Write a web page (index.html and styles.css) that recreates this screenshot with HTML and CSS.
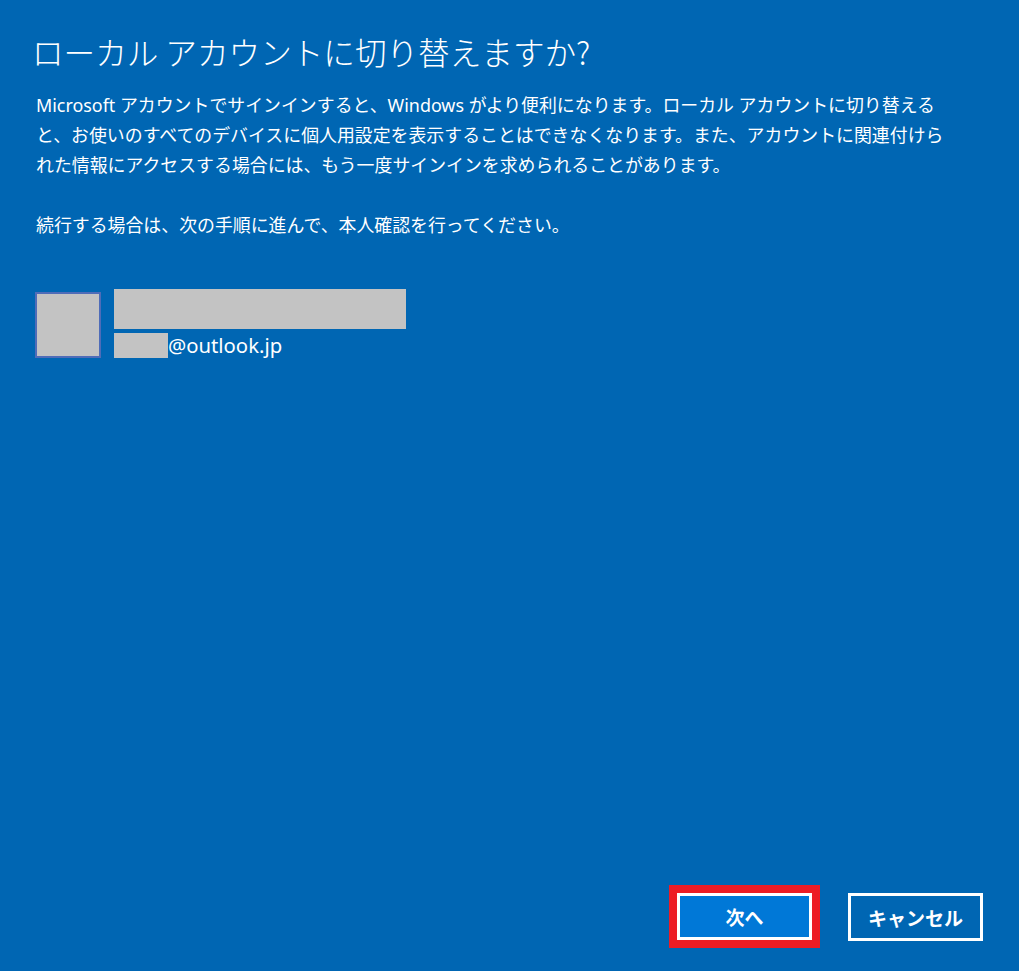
FILE: index.html
```html
<!DOCTYPE html>
<html lang="ja">
<head>
<meta charset="utf-8">
<link rel="stylesheet" href="styles.css">
</head>
<body>
<div class="page">
  <main class="content">
    <h1 class="title">ローカル アカウントに切り替えますか?</h1>
    <p class="desc">Microsoft アカウントでサインインすると、Windows がより便利になります。ローカル アカウントに切り替える<br>と、お使いのすべてのデバイスに個人用設定を表示することはできなくなります。また、アカウントに関連付けら<br>れた情報にアクセスする場合には、もう一度サインインを求められることがあります。</p>
    <p class="desc">続行する場合は、次の手順に進んで、本人確認を行ってください。</p>
    <div class="account">
      <div class="avatar"></div>
      <div class="account-info">
        <div class="name-mask"></div>
        <div class="email-row"><span class="email-mask"></span><span class="email">@outlook.jp</span></div>
      </div>
    </div>
  </main>
  <footer class="actions">
    <button class="btn btn-primary">次へ</button>
    <button class="btn btn-secondary">キャンセル</button>
  </footer>
</div>
</body>
</html>
```

FILE: styles.css
```css
html, body {
  margin: 0;
  padding: 0;
  background: #0066b3;
}
body {
  color: #ffffff;
  font-family: "Noto Sans", "Noto Sans CJK JP", sans-serif;
}
.page {
  height: 971px;
  display: flex;
  flex-direction: column;
  box-sizing: border-box;
}
.content {
  flex: 1;
  padding: 31px 36px 0 36px;
}
.title {
  margin: 0;
  font-family: "Noto Sans CJK JP", sans-serif;
  font-weight: 300;
  font-size: 31.6px;
  line-height: 40px;
  margin-left: -4px;
}
.desc {
  margin: 19px 0 0 0;
  font-family: "Noto Sans", "Noto Sans CJK JP", sans-serif;
  font-size: 17.9px;
  line-height: 30px;
  white-space: nowrap;
}
.desc + .desc {
  margin-top: 30px;
}
.account {
  display: flex;
  align-items: flex-start;
  gap: 13px;
  margin-top: 49px;
  margin-left: -1px;
}
.avatar {
  margin-top: 3px;
  width: 66px;
  height: 66px;
  box-sizing: border-box;
  border: 2px solid #4f6cb8;
  background: #c3c3c3;
}
.account-info {
  display: flex;
  flex-direction: column;
  gap: 4px;
}
.name-mask {
  width: 292px;
  height: 40px;
  background: #c3c3c3;
}
.email-row {
  display: flex;
  align-items: center;
  height: 25px;
}
.email-mask {
  width: 54px;
  height: 25px;
  background: #c3c3c3;
}
.email {
  font-family: "Noto Sans", sans-serif;
  font-size: 20.3px;
  line-height: 25px;
  margin-top: -1px;
}
.actions {
  display: flex;
  justify-content: flex-end;
  gap: 36px;
  padding: 0 36px 30px 0;
}
.btn {
  width: 135px;
  height: 48px;
  box-sizing: border-box;
  border: 3px solid #ffffff;
  color: #ffffff;
  font-family: "Noto Sans CJK JP", sans-serif;
  font-weight: 700;
  font-size: 19px;
  padding: 0;
}
.btn-primary {
  background: #0078d7;
  height: 47px;
  outline: 8px solid #ed1c24;
}
.btn-secondary {
  background: #0066b3;
}
```
